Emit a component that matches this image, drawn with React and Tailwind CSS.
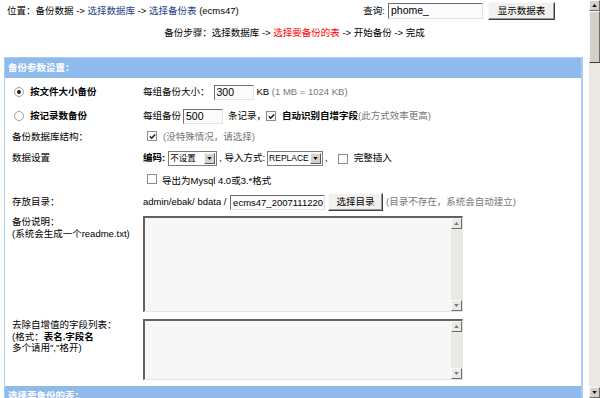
import React from 'react';

const FONT = 'font-["Liberation_Sans","Noto_Sans_CJK_SC",sans-serif]';

function Check({ checked }) {
  return (
    <span className="inline-flex w-[10px] h-[10px] shrink-0 items-center justify-center border border-[#8c8c8c] bg-white">
      {checked && (
        <svg viewBox="0 0 8 8" className="w-[7px] h-[7px]">
          <path d="M1 3.8 L3.1 6 L7 1.6" stroke="#1a1a1a" strokeWidth="1.7" fill="none" />
        </svg>
      )}
    </span>
  );
}

function Radio({ checked }) {
  return (
    <span className="inline-flex w-[10px] h-[10px] shrink-0 items-center justify-center rounded-full border border-[#a0a0a0] bg-white">
      {checked && <span className="w-[4px] h-[4px] rounded-full bg-[#222]" />}
    </span>
  );
}

function TextInput({ value, className }) {
  return (
    <div
      className={`h-[15px] overflow-hidden whitespace-nowrap border border-t-[#6e6e6e] border-l-[#6e6e6e] border-r-[#e3e3e3] border-b-[#e3e3e3] bg-[#fbfbfb] pl-[2px] leading-[13px] text-black ${className}`}
    >
      {value}
    </div>
  );
}

function Select({ value, className }) {
  return (
    <div className={`flex h-[15px] border border-[#7d7d7d] bg-white ${className}`}>
      <span className="flex-1 overflow-hidden whitespace-nowrap pl-[1px] text-[8.5px] leading-[13px]">{value}</span>
      <span className="my-px mr-px flex w-[11px] items-center justify-center border border-t-[#f4f4f4] border-l-[#f4f4f4] border-r-[#5a5a5a] border-b-[#5a5a5a] bg-[#d6d3cc]">
        <svg viewBox="0 0 6 4" className="w-[5px] h-[3px]">
          <path d="M0 0 L6 0 L3 4 Z" fill="#111" />
        </svg>
      </span>
    </div>
  );
}

function Button({ children, className }) {
  return (
    <div
      className={`flex items-center justify-center border border-t-[#fafafa] border-l-[#fafafa] border-r-[#3e3e3e] border-b-[#3e3e3e] bg-[#f2f1ee] text-[9.5px] shadow-[inset_-1px_-1px_#9a9a9a] ${className}`}
    >
      {children}
    </div>
  );
}

function ScrollBtn({ up, dark }) {
  return (
    <span
      className={`flex h-[11px] w-[11px] shrink-0 items-center justify-center border border-t-[#fafafa] border-l-[#fafafa] border-r-[#6a6a6a] border-b-[#6a6a6a] ${dark ? 'bg-[#d4d0c8]' : 'bg-[#ebe9e3]'}`}
    >
      <svg viewBox="0 0 6 4" className="w-[5px] h-[3px]">
        <path d={up ? 'M0 4 L6 4 L3 0 Z' : 'M0 0 L6 0 L3 4 Z'} fill={dark ? '#111' : '#777'} />
      </svg>
    </span>
  );
}

function FakeTextarea({ className }) {
  return (
    <div
      className={`flex w-[320px] border-t-2 border-l-2 border-r border-b border-t-[#626262] border-l-[#626262] border-r-[#e5e5e5] border-b-[#e5e5e5] bg-[#f7f7f7] ${className}`}
    >
      <div className="flex-1" />
      <div className="flex w-[11px] flex-col bg-[#ebe9e3]">
        <ScrollBtn up />
        <div className="flex-1" />
        <ScrollBtn />
      </div>
    </div>
  );
}

function Row({ label, className, children, top }) {
  return (
    <div className={`flex pl-[7px] ${top ? 'items-start' : 'items-center'} ${className}`}>
      <div className="w-[131px] shrink-0">{label}</div>
      <div className="flex items-center">{children}</div>
    </div>
  );
}

export default function App() {
  return (
    <div className={`flex h-[398px] w-[600px] overflow-hidden bg-white text-[9.5px] text-black ${FONT}`}>
      <div className="w-[589px] shrink-0">
        {/* position + search */}
        <div className="flex h-[22px] items-center pl-[7px] pr-[34px]">
          <span className="whitespace-pre">
            位置：备份数据 -&gt; <span className="text-[#1b3f84]">选择数据库</span> -&gt;{' '}
            <span className="text-[#1b3f84]">选择备份表</span> (ecms47)
          </span>
          <div className="ml-auto flex items-center">
            <span className="mr-[3px]">查询:</span>
            <TextInput value="phome_" className="h-[16px] w-[95px] text-[10.5px]" />
            <Button className="ml-[5px] h-[18px] w-[67px]">显示数据表</Button>
          </div>
        </div>

        {/* steps */}
        <div className="flex h-[22px] items-center justify-center whitespace-pre">
          <span>
            备份步骤：选择数据库 -&gt; <span className="text-[#ff0000]">选择要备份的表</span> -&gt; 开始备份 -&gt; 完成
          </span>
        </div>

        {/* settings table */}
        <div className="ml-[4px] mt-[13px] w-[579px] border-t border-l border-r-2 border-[#a8ccf2]">
          <div className="flex h-[20px] items-center bg-[#8ebbec] pl-[3px] font-bold text-white">备份参数设置：</div>

          <Row
            className="h-[28px]"
            label={
              <span className="flex items-center pl-[2px]">
                <Radio checked />
                <span className="ml-[6px] font-bold">按文件大小备份</span>
              </span>
            }
          >
            <span>每组备份大小：</span>
            <TextInput value="300" className="ml-[4px] w-[40px] text-[10.5px]" />
            <span className="ml-[3px] whitespace-pre">
              KB <span className="text-[#777]">(1 MB = 1024 KB)</span>
            </span>
          </Row>

          <Row
            className="h-[20px]"
            label={
              <span className="flex items-center pl-[2px]">
                <Radio />
                <span className="ml-[6px] font-bold">按记录数备份</span>
              </span>
            }
          >
            <span>每组备份</span>
            <TextInput value="500" className="ml-[2px] w-[40px] text-[10.5px]" />
            <span className="ml-[5px]">条记录，</span>
            <Check checked />
            <span className="ml-[6px] font-semibold">自动识别自增字段</span>
            <span className="text-[#777]">(此方式效率更高)</span>
          </Row>

          <Row className="h-[22px]" label="备份数据库结构：">
            <span className="ml-[4px]">
              <Check checked />
            </span>
            <span className="ml-[6px] text-[#777]">(没特殊情况，请选择)</span>
          </Row>

          <Row className="h-[21px]" label="数据设置">
            <span className="font-bold">编码:</span>
            <Select value="不设置" className="ml-[3px] w-[49px]" />
            <span className="ml-[2px] whitespace-pre">, 导入方式:</span>
            <Select value="REPLACE" className="ml-[2px] w-[56px]" />
            <span className="ml-[2px] mr-[10px]">,</span>
            <Check />
            <span className="ml-[6px]">完整插入</span>
          </Row>

          <Row className="h-[24px]" label="">
            <span className="ml-[4px]">
              <Check />
            </span>
            <span className="ml-[5px]">导出为Mysql 4.0或3.*格式</span>
          </Row>

          <Row className="h-[18px]" label="存放目录：">
            <span className="whitespace-pre">admin/ebak/ bdata / </span>
            <TextInput value="ecms47_2007111220" className="ml-[1px] w-[95px] text-[9.5px]" />
            <Button className="ml-[3px] h-[18px] w-[55px]">选择目录</Button>
            <span className="ml-[3px] text-[#777]">(目录不存在，系统会自动建立)</span>
          </Row>

          <Row
            top
            className="h-[105px] pt-[5px]"
            label={
              <div className="leading-[11.5px]">
                备份说明：
                <br />
                (系统会生成一个readme.txt)
              </div>
            }
          >
            <FakeTextarea className="h-[96px]" />
          </Row>

          <Row
            top
            className="h-[68px] pt-[3px]"
            label={
              <div className="leading-[11.5px]">
                去除自增值的字段列表：
                <br />
                (格式：<b>表名.字段名</b>
                <br />
                多个请用&quot;,&quot;格开)
              </div>
            }
          >
            <FakeTextarea className="h-[61px]" />
          </Row>

          <div className="h-[2px]" />
          <div className="flex h-[20px] items-center bg-[#8ebbec] pl-[3px] font-bold text-white">选择要备份的表：</div>
        </div>
      </div>

      {/* window scrollbar */}
      <div className="flex w-[11px] flex-col bg-[#ebe9e3]">
        <ScrollBtn up dark />
        <div className="h-[52px] border border-t-[#fafafa] border-l-[#fafafa] border-r-[#6a6a6a] border-b-[#3a3a3a] bg-[#d4d0c8]" />
        <div className="flex-1" />
        <ScrollBtn dark />
      </div>
    </div>
  );
}
